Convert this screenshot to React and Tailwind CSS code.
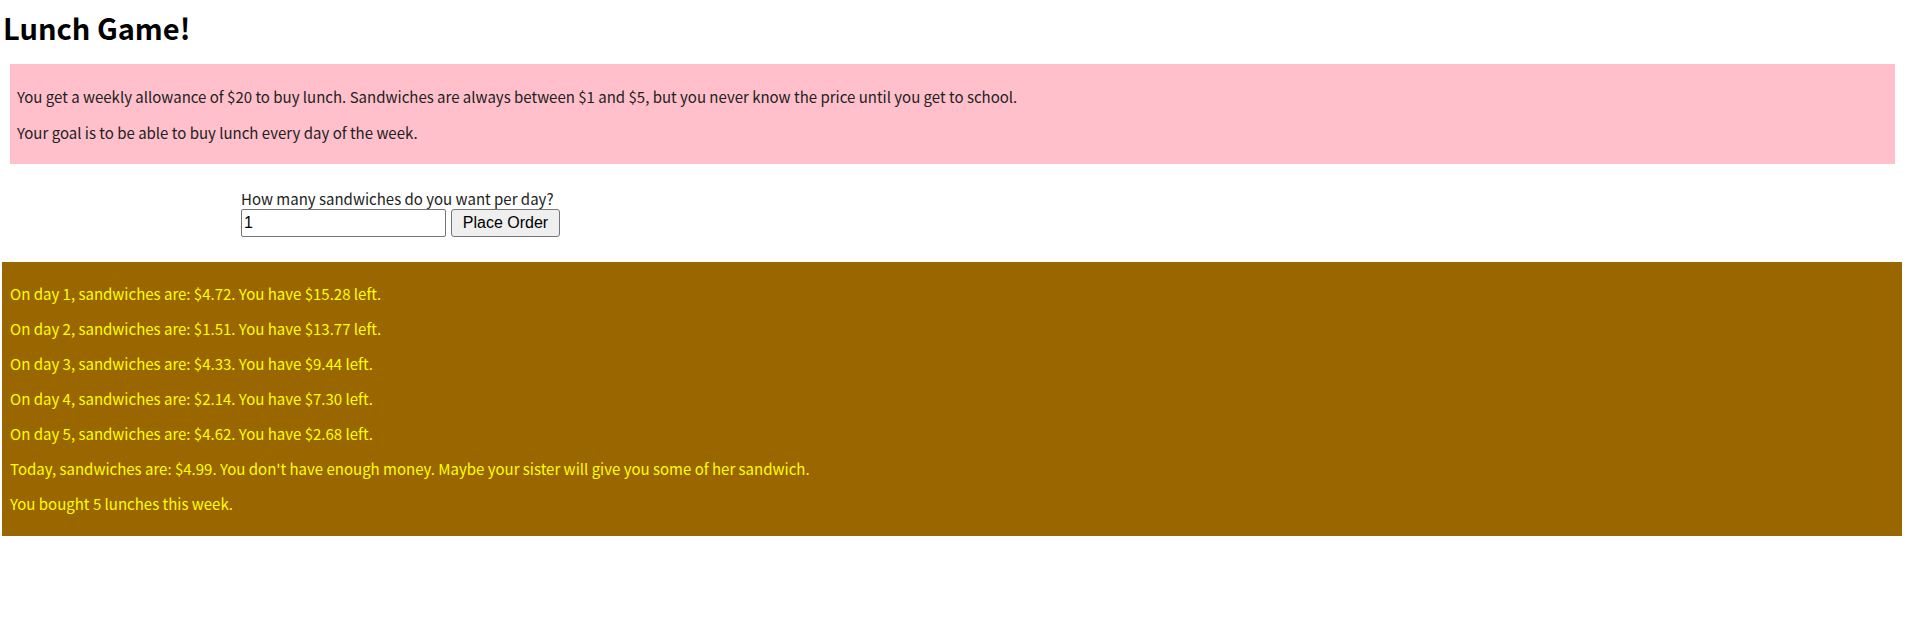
const results = [
  'On day 1, sandwiches are: $4.72. You have $15.28 left.',
  'On day 2, sandwiches are: $1.51. You have $13.77 left.',
  'On day 3, sandwiches are: $4.33. You have $9.44 left.',
  'On day 4, sandwiches are: $2.14. You have $7.30 left.',
  'On day 5, sandwiches are: $4.62. You have $2.68 left.',
  "Today, sandwiches are: $4.99. You don't have enough money. Maybe your sister will give you some of her sandwich.",
  'You bought 5 lunches this week.',
];

export default function App() {
  const font = { fontFamily: '"Noto Sans CJK KR", "Noto Sans", sans-serif' };
  const arial = { fontFamily: '"Liberation Sans", Arial, sans-serif' };
  return (
    <div className="min-h-[630px] bg-white text-[15px] leading-[20px] text-[#222]" style={font}>
      <h1 className="h-[46px] pl-[3px] pt-[8px] text-[29px] font-bold leading-[38px] text-black">Lunch Game!</h1>

      <div className="ml-[10px] mr-[17px] mt-[18px] flex h-[100px] flex-col gap-[16px] bg-[#ffc0cb] pl-[7px] pt-[23px]">
        <p>You get a weekly allowance of $20 to buy lunch. Sandwiches are always between $1 and $5, but you never know the price until you get to school.</p>
        <p>Your goal is to be able to buy lunch every day of the week.</p>
      </div>

      <div className="ml-[241px] mt-[25px] flex h-[48px] flex-col">
        <label className="h-[20px] text-[15px] leading-[20px] text-[#222]">How many sandwiches do you want per day?</label>
        <div className="flex h-[28px] gap-[5px]">
          <input
            type="text"
            defaultValue="1"
            className="h-[28px] w-[205px] rounded-[2px] border border-[#767676] px-[2px] text-[16px] leading-[20px] text-black"
            style={arial}
          />
          <button
            className="h-[28px] w-[109px] rounded-[3px] border border-[#767676] bg-[#efefef] text-[16px] leading-[20px] text-black"
            style={arial}
          >
            Place Order
          </button>
        </div>
      </div>

      <div className="ml-[2px] mr-[10px] mt-[25px] flex h-[274px] flex-col gap-[15px] bg-[#996600] pl-[8px] pt-[22px] text-[#ffff00]">
        {results.map((r, i) => (
          <p key={i}>{r}</p>
        ))}
      </div>
    </div>
  );
}
